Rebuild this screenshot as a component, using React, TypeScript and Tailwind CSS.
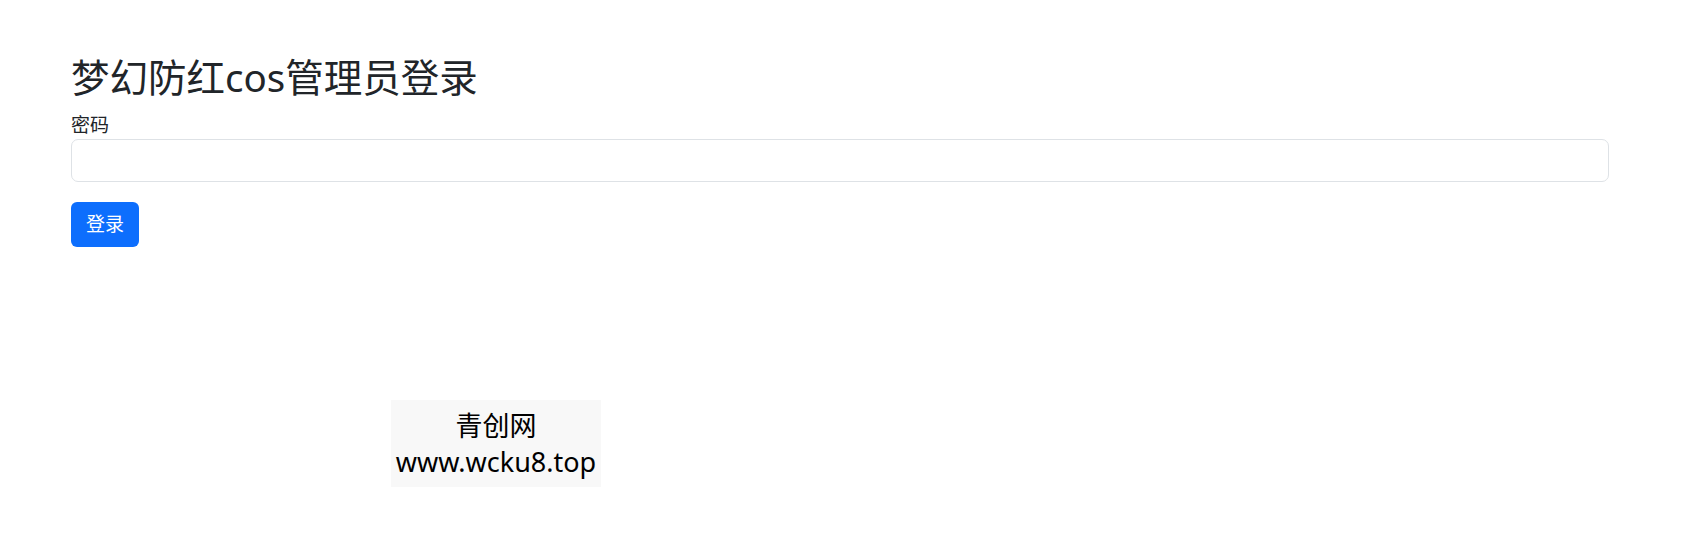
export default function App() {
  return (
    <div
      className="w-[1702px] h-[550px] bg-white text-[#212529]"
      style={{ fontFamily: '"Noto Sans", "Noto Sans CJK SC", sans-serif' }}
    >
      <div className="pl-[71px] pt-[54px]">
        <h1 className="h-[47px] leading-[47px] text-[38.5px] font-normal mb-[11px]">梦幻防红cos管理员登录</h1>
        <label className="block h-[26px] leading-[26px] text-[19px]">密码</label>
        <input
          type="password"
          className="block mt-[1px] w-[1538px] h-[43px] border border-[#dee2e6] rounded-[7px] bg-white outline-none"
        />
        <button className="mt-[20px] w-[68px] h-[45px] bg-[#0d6efd] text-white text-[19px] rounded-[6px]">登录</button>
        <div className="mt-[153px] ml-[320px] w-[210px] h-[87px] bg-[#f8f8f8] flex flex-col items-center justify-center text-black text-[27px] leading-[36px]">
          <div>青创网</div>
          <div>www.wcku8.top</div>
        </div>
      </div>
    </div>
  );
}
